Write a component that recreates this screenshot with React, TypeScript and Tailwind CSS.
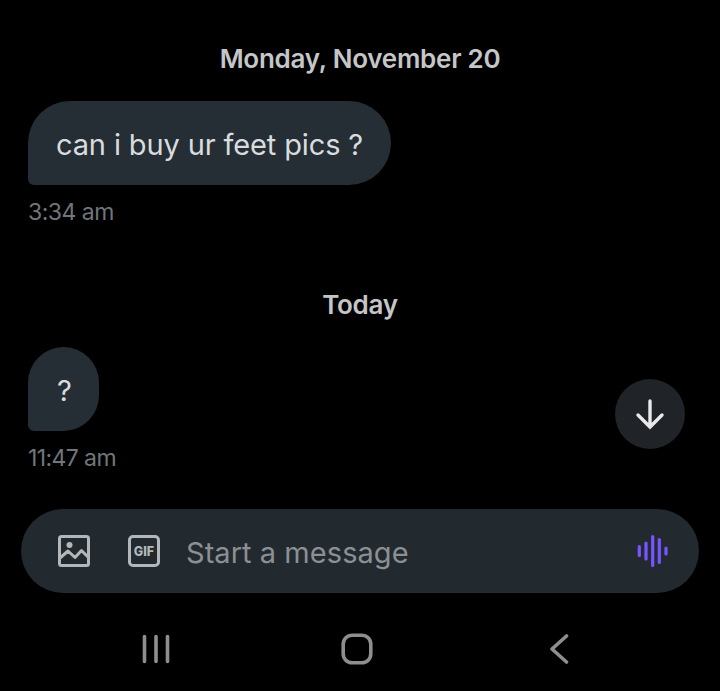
import React from 'react';

const GalleryIcon = () => (
  <svg width="32" height="32" viewBox="0 0 32 32" fill="none" stroke="#b3b7ba" strokeWidth="3" strokeLinejoin="round" strokeLinecap="round">
    <rect x="1.5" y="1.5" width="29" height="29" rx="2" />
    <circle cx="11.5" cy="10" r="3" fill="#b3b7ba" stroke="none" />
    <path d="M2 23l8-7 7 6.5 6.5-7 7 7" />
  </svg>
);

const GifIcon = () => (
  <svg width="32" height="32" viewBox="0 0 32 32" fill="none">
    <rect x="1.5" y="1.5" width="29" height="29" rx="3.5" stroke="#b3b7ba" strokeWidth="3" />
    <text x="16" y="20.5" textAnchor="middle" fontFamily="Inter, sans-serif" fontWeight="800" fontSize="12.5" fill="#b3b7ba">GIF</text>
  </svg>
);

const VoiceIcon = () => (
  <svg width="32" height="32" viewBox="0 0 32 32" fill="none" stroke="#7856ff" strokeWidth="3.2" strokeLinecap="round">
    <path d="M2.3 11.5v9M9 8v16M15.7 1.6v28.8M22.3 4.6v22.8M29 13v6" />
  </svg>
);

const ScrollDownIcon = () => (
  <svg width="30" height="32" viewBox="0 0 30 32" fill="none" stroke="#e7e9ea" strokeWidth="3.4" strokeLinecap="round" strokeLinejoin="miter">
    <path d="M15 3v26M3 17l12 12 12-12" />
  </svg>
);

const RecentsIcon = () => (
  <svg width="28" height="30" viewBox="0 0 28 30" fill="none" stroke="#8e8e8e" strokeWidth="3.6" strokeLinecap="round">
    <path d="M2.5 2.5v25M14 2.5v25M25.5 2.5v25" />
  </svg>
);

const HomeIcon = () => (
  <svg width="32" height="32" viewBox="0 0 32 32" fill="none" stroke="#8e8e8e" strokeWidth="3.6">
    <rect x="2.2" y="2.2" width="27.6" height="27.6" rx="9" />
  </svg>
);

const BackIcon = () => (
  <svg width="20" height="30" viewBox="0 0 20 30" fill="none" stroke="#8e8e8e" strokeWidth="3.6" strokeLinecap="round" strokeLinejoin="round">
    <path d="M17.5 2L3 15l14.5 13" />
  </svg>
);

export default function App() {
  return (
    <div className="relative flex h-[691px] w-[720px] flex-col overflow-hidden bg-black font-['Inter',sans-serif]">
      <main className="flex-1 px-7">
        <p className="pt-[43px] text-center text-[26px] leading-[32px] font-semibold tracking-[-0.25px] text-[#c4c6c8]">
          Monday, November 20
        </p>
        <div className="mt-[26px] w-fit rounded-[42px] rounded-bl-[6px] bg-[#252e35] pt-[26px] pr-[28px] pb-[22px] pl-[28px] text-[29px] leading-[36px] tracking-[-0.13px] text-[#d9dcde]">
          can i buy ur feet pics ?
        </div>
        <p className="mt-[13px] text-[23px] leading-[28px] tracking-[-0.5px] text-[#71767b]">3:34 am</p>
        <p className="mt-[63px] text-center text-[26px] leading-[32px] font-semibold tracking-[-0.25px] text-[#c4c6c8]">
          Today
        </p>
        <div className="mt-[26px] w-fit rounded-[36px] rounded-bl-[6px] bg-[#252e35] pt-[26px] pr-[27px] pb-[22px] pl-[29px] text-[29px] leading-[36px] text-[#d9dcde]">
          ?
        </div>
        <p className="mt-[13px] text-[23px] leading-[28px] tracking-[-0.6px] text-[#71767b]">11:47 am</p>
      </main>

      <button className="absolute top-[379px] left-[615px] flex h-[70px] w-[70px] items-center justify-center rounded-full bg-[#202327]">
        <ScrollDownIcon />
      </button>

      <div className="mx-[21px] flex h-[84px] items-center rounded-[42px] bg-[#22292f] pr-[30px] pl-[37px]">
        <GalleryIcon />
        <div className="ml-[38px]">
          <GifIcon />
        </div>
        <span className="ml-[26px] flex-1 pt-[4px] text-[29px] tracking-[0.05px] text-[#8b9093]">Start a message</span>
        <VoiceIcon />
      </div>

      <nav className="flex h-[98px] items-center pt-[14px] pl-[142px]">
        <RecentsIcon />
        <div className="ml-[171px]">
          <HomeIcon />
        </div>
        <div className="ml-[176px]">
          <BackIcon />
        </div>
      </nav>
    </div>
  );
}
